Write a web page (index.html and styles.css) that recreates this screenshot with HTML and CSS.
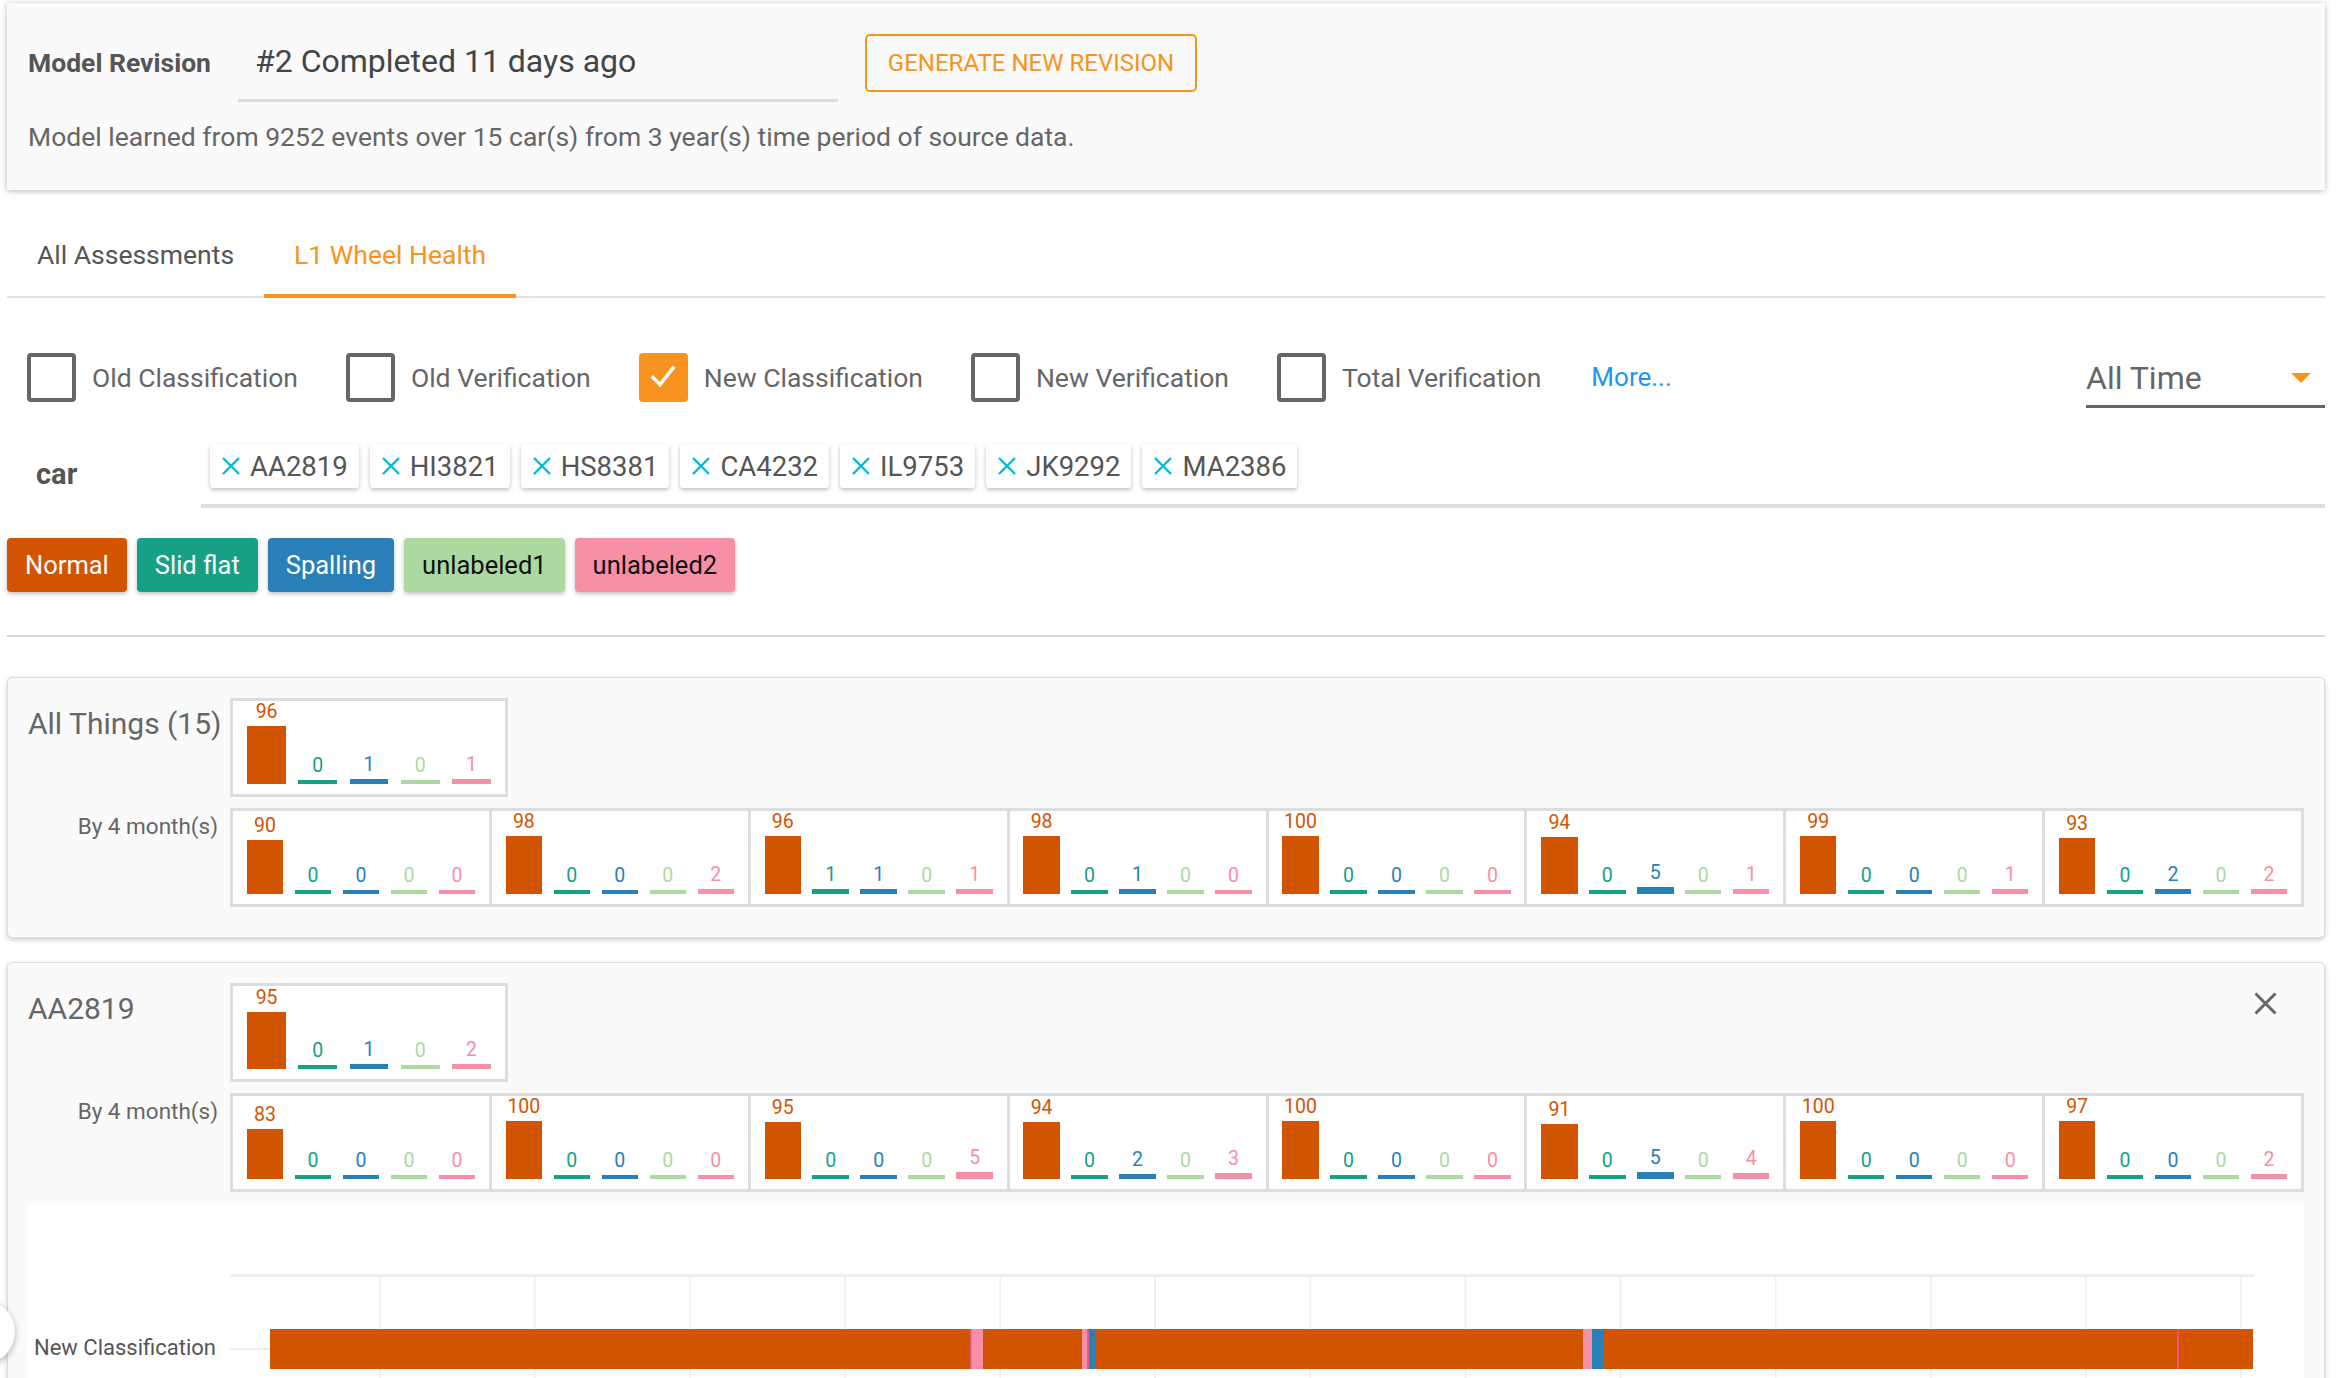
FILE: index.html
```html
<!DOCTYPE html>
<html>
<head>
<meta charset="utf-8">
<title>Model Revision</title>
<link rel="stylesheet" href="styles.css">
</head>
<body>
<div class="page">
  <section class="revision-card">
    <div class="rev-row">
      <div class="rev-label">Model Revision</div>
      <div class="rev-field">#2 Completed 11 days ago</div>
      <button class="gen-btn">Generate new revision</button>
    </div>
    <div class="rev-desc">Model learned from 9252 events over 15 car(s) from 3 year(s) time period of source data.</div>
  </section>

  <nav class="tabs">
    <div class="tab">All Assessments</div>
    <div class="tab active">L1 Wheel Health</div>
  </nav>

  <div class="filters">
    <div class="check"><span class="box"></span>Old Classification</div>
    <div class="check"><span class="box"></span>Old Verification</div>
    <div class="check"><span class="box on"><svg width="28" height="24" viewBox="0 0 28 24"><path d="M4 12.5 L11 19.5 L24 3" fill="none" stroke="#fff" stroke-width="3.5" stroke-linecap="square"/></svg></span>New Classification</div>
    <div class="check"><span class="box"></span>New Verification</div>
    <div class="check"><span class="box"></span>Total Verification</div>
    <div class="more">More...</div>
    <div class="range"><span>All Time</span><svg width="20" height="10" viewBox="0 0 20 10"><polygon points="0,0 20,0 10,10" fill="#f7931e"/></svg></div>
  </div>

  <div class="car-row">
    <div class="car-label">car</div>
    <div class="chip-field">
      <div class="chip"><svg class="x" width="20" height="18" viewBox="0 0 20 18"><path d="M2 1 L18 17 M18 1 L2 17" stroke="#00bcd4" stroke-width="2.4"/></svg>AA2819</div>
      <div class="chip"><svg class="x" width="20" height="18" viewBox="0 0 20 18"><path d="M2 1 L18 17 M18 1 L2 17" stroke="#00bcd4" stroke-width="2.4"/></svg>HI3821</div>
      <div class="chip"><svg class="x" width="20" height="18" viewBox="0 0 20 18"><path d="M2 1 L18 17 M18 1 L2 17" stroke="#00bcd4" stroke-width="2.4"/></svg>HS8381</div>
      <div class="chip"><svg class="x" width="20" height="18" viewBox="0 0 20 18"><path d="M2 1 L18 17 M18 1 L2 17" stroke="#00bcd4" stroke-width="2.4"/></svg>CA4232</div>
      <div class="chip"><svg class="x" width="20" height="18" viewBox="0 0 20 18"><path d="M2 1 L18 17 M18 1 L2 17" stroke="#00bcd4" stroke-width="2.4"/></svg>IL9753</div>
      <div class="chip"><svg class="x" width="20" height="18" viewBox="0 0 20 18"><path d="M2 1 L18 17 M18 1 L2 17" stroke="#00bcd4" stroke-width="2.4"/></svg>JK9292</div>
      <div class="chip"><svg class="x" width="20" height="18" viewBox="0 0 20 18"><path d="M2 1 L18 17 M18 1 L2 17" stroke="#00bcd4" stroke-width="2.4"/></svg>MA2386</div>
    </div>
  </div>

  <div class="legend">
    <div class="tag t0">Normal</div>
    <div class="tag t1">Slid flat</div>
    <div class="tag t2">Spalling</div>
    <div class="tag t3">unlabeled1</div>
    <div class="tag t4">unlabeled2</div>
  </div>

  <div class="divider"></div>

  <section class="thing">
    <div class="thing-title">All Things (15)</div>
    <div class="chart summary">
      <div class="band s0"><span class="val">96</span><i class="bar" style="height:57.8px"></i></div>
      <div class="band s1"><span class="val">0</span><i class="bar"></i></div>
      <div class="band s2"><span class="val">1</span><i class="bar" style="height:4.6px"></i></div>
      <div class="band s3"><span class="val">0</span><i class="bar"></i></div>
      <div class="band s4"><span class="val">1</span><i class="bar" style="height:4.6px"></i></div>
    </div>
    <div class="period">By 4 month(s)</div>
    <div class="strip">
      <div class="chart">
        <div class="band s0"><span class="val">90</span><i class="bar" style="height:54.4px"></i></div>
        <div class="band s1"><span class="val">0</span><i class="bar"></i></div>
        <div class="band s2"><span class="val">0</span><i class="bar"></i></div>
        <div class="band s3"><span class="val">0</span><i class="bar"></i></div>
        <div class="band s4"><span class="val">0</span><i class="bar"></i></div>
      </div>
      <div class="chart">
        <div class="band s0"><span class="val">98</span><i class="bar" style="height:58.9px"></i></div>
        <div class="band s1"><span class="val">0</span><i class="bar"></i></div>
        <div class="band s2"><span class="val">0</span><i class="bar"></i></div>
        <div class="band s3"><span class="val">0</span><i class="bar"></i></div>
        <div class="band s4"><span class="val">2</span><i class="bar" style="height:5.1px"></i></div>
      </div>
      <div class="chart">
        <div class="band s0"><span class="val">96</span><i class="bar" style="height:57.8px"></i></div>
        <div class="band s1"><span class="val">1</span><i class="bar" style="height:4.6px"></i></div>
        <div class="band s2"><span class="val">1</span><i class="bar" style="height:4.6px"></i></div>
        <div class="band s3"><span class="val">0</span><i class="bar"></i></div>
        <div class="band s4"><span class="val">1</span><i class="bar" style="height:4.6px"></i></div>
      </div>
      <div class="chart">
        <div class="band s0"><span class="val">98</span><i class="bar" style="height:58.9px"></i></div>
        <div class="band s1"><span class="val">0</span><i class="bar"></i></div>
        <div class="band s2"><span class="val">1</span><i class="bar" style="height:4.6px"></i></div>
        <div class="band s3"><span class="val">0</span><i class="bar"></i></div>
        <div class="band s4"><span class="val">0</span><i class="bar"></i></div>
      </div>
      <div class="chart">
        <div class="band s0"><span class="val">100</span><i class="bar" style="height:60px"></i></div>
        <div class="band s1"><span class="val">0</span><i class="bar"></i></div>
        <div class="band s2"><span class="val">0</span><i class="bar"></i></div>
        <div class="band s3"><span class="val">0</span><i class="bar"></i></div>
        <div class="band s4"><span class="val">0</span><i class="bar"></i></div>
      </div>
      <div class="chart">
        <div class="band s0"><span class="val">94</span><i class="bar" style="height:56.6px"></i></div>
        <div class="band s1"><span class="val">0</span><i class="bar"></i></div>
        <div class="band s2"><span class="val">5</span><i class="bar" style="height:6.8px"></i></div>
        <div class="band s3"><span class="val">0</span><i class="bar"></i></div>
        <div class="band s4"><span class="val">1</span><i class="bar" style="height:4.6px"></i></div>
      </div>
      <div class="chart">
        <div class="band s0"><span class="val">99</span><i class="bar" style="height:59.4px"></i></div>
        <div class="band s1"><span class="val">0</span><i class="bar"></i></div>
        <div class="band s2"><span class="val">0</span><i class="bar"></i></div>
        <div class="band s3"><span class="val">0</span><i class="bar"></i></div>
        <div class="band s4"><span class="val">1</span><i class="bar" style="height:4.6px"></i></div>
      </div>
      <div class="chart">
        <div class="band s0"><span class="val">93</span><i class="bar" style="height:56.1px"></i></div>
        <div class="band s1"><span class="val">0</span><i class="bar"></i></div>
        <div class="band s2"><span class="val">2</span><i class="bar" style="height:5.1px"></i></div>
        <div class="band s3"><span class="val">0</span><i class="bar"></i></div>
        <div class="band s4"><span class="val">2</span><i class="bar" style="height:5.1px"></i></div>
      </div>
    </div>
  </section>

  <section class="thing">
    <div class="thing-title">AA2819</div>
    <div class="chart summary">
      <div class="band s0"><span class="val">95</span><i class="bar" style="height:57.2px"></i></div>
      <div class="band s1"><span class="val">0</span><i class="bar"></i></div>
      <div class="band s2"><span class="val">1</span><i class="bar" style="height:4.6px"></i></div>
      <div class="band s3"><span class="val">0</span><i class="bar"></i></div>
      <div class="band s4"><span class="val">2</span><i class="bar" style="height:5.1px"></i></div>
    </div>
    <svg class="close" width="23" height="23" viewBox="0 0 23 23"><path d="M1.5 1.5 L21.5 21.5 M21.5 1.5 L1.5 21.5" stroke="#666" stroke-width="3"/></svg>
    <div class="period">By 4 month(s)</div>
    <div class="strip">
      <div class="chart">
        <div class="band s0"><span class="val">83</span><i class="bar" style="height:50.5px"></i></div>
        <div class="band s1"><span class="val">0</span><i class="bar"></i></div>
        <div class="band s2"><span class="val">0</span><i class="bar"></i></div>
        <div class="band s3"><span class="val">0</span><i class="bar"></i></div>
        <div class="band s4"><span class="val">0</span><i class="bar"></i></div>
      </div>
      <div class="chart">
        <div class="band s0"><span class="val">100</span><i class="bar" style="height:60px"></i></div>
        <div class="band s1"><span class="val">0</span><i class="bar"></i></div>
        <div class="band s2"><span class="val">0</span><i class="bar"></i></div>
        <div class="band s3"><span class="val">0</span><i class="bar"></i></div>
        <div class="band s4"><span class="val">0</span><i class="bar"></i></div>
      </div>
      <div class="chart">
        <div class="band s0"><span class="val">95</span><i class="bar" style="height:57.2px"></i></div>
        <div class="band s1"><span class="val">0</span><i class="bar"></i></div>
        <div class="band s2"><span class="val">0</span><i class="bar"></i></div>
        <div class="band s3"><span class="val">0</span><i class="bar"></i></div>
        <div class="band s4"><span class="val">5</span><i class="bar" style="height:6.8px"></i></div>
      </div>
      <div class="chart">
        <div class="band s0"><span class="val">94</span><i class="bar" style="height:56.6px"></i></div>
        <div class="band s1"><span class="val">0</span><i class="bar"></i></div>
        <div class="band s2"><span class="val">2</span><i class="bar" style="height:5.1px"></i></div>
        <div class="band s3"><span class="val">0</span><i class="bar"></i></div>
        <div class="band s4"><span class="val">3</span><i class="bar" style="height:5.7px"></i></div>
      </div>
      <div class="chart">
        <div class="band s0"><span class="val">100</span><i class="bar" style="height:60px"></i></div>
        <div class="band s1"><span class="val">0</span><i class="bar"></i></div>
        <div class="band s2"><span class="val">0</span><i class="bar"></i></div>
        <div class="band s3"><span class="val">0</span><i class="bar"></i></div>
        <div class="band s4"><span class="val">0</span><i class="bar"></i></div>
      </div>
      <div class="chart">
        <div class="band s0"><span class="val">91</span><i class="bar" style="height:55px"></i></div>
        <div class="band s1"><span class="val">0</span><i class="bar"></i></div>
        <div class="band s2"><span class="val">5</span><i class="bar" style="height:6.8px"></i></div>
        <div class="band s3"><span class="val">0</span><i class="bar"></i></div>
        <div class="band s4"><span class="val">4</span><i class="bar" style="height:6.2px"></i></div>
      </div>
      <div class="chart">
        <div class="band s0"><span class="val">100</span><i class="bar" style="height:60px"></i></div>
        <div class="band s1"><span class="val">0</span><i class="bar"></i></div>
        <div class="band s2"><span class="val">0</span><i class="bar"></i></div>
        <div class="band s3"><span class="val">0</span><i class="bar"></i></div>
        <div class="band s4"><span class="val">0</span><i class="bar"></i></div>
      </div>
      <div class="chart">
        <div class="band s0"><span class="val">97</span><i class="bar" style="height:58.3px"></i></div>
        <div class="band s1"><span class="val">0</span><i class="bar"></i></div>
        <div class="band s2"><span class="val">0</span><i class="bar"></i></div>
        <div class="band s3"><span class="val">0</span><i class="bar"></i></div>
        <div class="band s4"><span class="val">2</span><i class="bar" style="height:5.1px"></i></div>
      </div>
    </div>
    <div class="timeline">
      <div class="tl-label">New Classification</div>
      <svg class="tl-plot" width="2074" height="190" viewBox="0 0 2074 190">
        <rect x="0" y="71" width="2024" height="3" fill="#eeeeee"/>
        <g fill="#eeeeee">
          <rect x="149" y="71" width="1.5" height="119"/>
          <rect x="304.1" y="71" width="1.5" height="119"/>
          <rect x="459.2" y="71" width="1.5" height="119"/>
          <rect x="614.3" y="71" width="1.5" height="119"/>
          <rect x="769.4" y="71" width="1.5" height="119"/>
          <rect x="924.5" y="71" width="1.5" height="119"/>
          <rect x="1079.6" y="71" width="1.5" height="119"/>
          <rect x="1234.7" y="71" width="1.5" height="119"/>
          <rect x="1389.8" y="71" width="1.5" height="119"/>
          <rect x="1544.9" y="71" width="1.5" height="119"/>
          <rect x="1700" y="71" width="1.5" height="119"/>
          <rect x="1855.1" y="71" width="1.5" height="119"/>
          <rect x="2010.2" y="71" width="1.5" height="119"/>
        </g>
        <rect x="0" y="145" width="2024" height="2" fill="#eeeeee"/>
        <rect x="40" y="126" width="1983" height="40" fill="#d35400"/>
        <rect x="740" y="126" width="13" height="40" fill="#f78fa7"/>
        <rect x="740" y="126" width="1.5" height="40" fill="#ea5a7c"/>
        <rect x="852" y="126" width="5" height="40" fill="#f78fa7"/>
        <rect x="857" y="126" width="2" height="40" fill="#ea5a7c"/>
        <rect x="859" y="126" width="6" height="40" fill="#2980b9"/>
        <rect x="1353" y="126" width="9" height="40" fill="#f78fa7"/>
        <rect x="1362" y="126" width="12" height="40" fill="#2980b9"/>
        <rect x="1947" y="126" width="2" height="40" fill="#f0507a"/>
      </svg>
    </div>
  </section>
</div>
<div class="fab"></div>
</body>
</html>
```

FILE: styles.css
```css
* { box-sizing: border-box; }
html, body { margin: 0; padding: 0; background: #fff; }
body {
  font-family: Roboto, "Noto Sans", "Liberation Sans", sans-serif;
  color: #666;
  position: relative;
  overflow: hidden;
}
.page { padding: 0 13px 0 7px; }

/* revision card */
.revision-card {
  margin-top: 3px;
  background: #fafafa;
  box-shadow: 0 1px 6px rgba(0, 0, 0, 0.28);
  padding: 31px 21px 38px;
}
.rev-row { display: flex; align-items: flex-start; }
.rev-label {
  width: 210px;
  font-size: 26.5px;
  font-weight: 700;
  color: #555;
  line-height: 58px;
}
.rev-field {
  width: 600px;
  height: 68px;
  border-bottom: 3px solid #ddd;
  padding-left: 17px;
  font-size: 32px;
  line-height: 54px;
  color: #444;
}
.gen-btn {
  margin-left: 27px;
  width: 332px;
  height: 58px;
  border: 2px solid #f7931e;
  border-radius: 5px;
  background: transparent;
  color: #f7931e;
  font-family: inherit;
  font-size: 24px;
  text-transform: uppercase;
  display: flex;
  align-items: center;
  justify-content: center;
  padding: 0;
}
.rev-desc { margin-top: 20px; font-size: 26.5px; line-height: 30px; color: #666; }

/* tabs */
.tabs { margin-top: 10px; display: flex; border-bottom: 2px solid #e3e3e3; }
.tab {
  padding: 40px 30px 24px;
  font-size: 26.5px;
  line-height: 30px;
  color: #555;
  border-bottom: 4px solid transparent;
  margin-bottom: -2px;
}
.tab.active { color: #f7931e; border-bottom-color: #f7931e; }

/* filters */
.filters { margin-top: 54px; display: flex; align-items: flex-start; padding-left: 20px; }
.check {
  display: flex;
  align-items: center;
  height: 50px;
  margin-right: 48px;
  font-size: 26.5px;
  color: #666;
}
.box {
  width: 49px;
  height: 49px;
  border: 4px solid #666;
  border-radius: 4px;
  margin-right: 16px;
  flex: none;
}
.box.on {
  background: #f7931e;
  border-color: #f7931e;
  display: flex;
  align-items: center;
  justify-content: center;
}
.more { color: #2196f3; font-size: 26px; line-height: 50px; margin-left: 2px; }
.range {
  margin-left: auto;
  width: 239px;
  height: 56px;
  border-bottom: 3px solid #666;
  display: flex;
  align-items: center;
  justify-content: space-between;
  padding: 0 14px 2px 0;
  font-size: 32px;
  color: #666;
}

/* car chips */
.car-row { margin-top: 36px; display: flex; }
.car-label {
  width: 194px;
  padding: 13px 0 0 29px;
  font-size: 29px;
  font-weight: 700;
  line-height: 34px;
  color: #555;
}
.chip-field {
  flex: 1;
  display: flex;
  gap: 11px;
  padding: 0 0 16px 9px;
  border-bottom: 4px solid #ddd;
}
.chip {
  height: 44px;
  display: flex;
  align-items: center;
  padding: 0 11px;
  background: #fff;
  border-radius: 3px;
  box-shadow: 0 2px 4px rgba(0, 0, 0, 0.25);
  font-size: 27.5px;
  color: #555;
}
.chip .x { margin-right: 9px; flex: none; }

/* legend */
.legend { margin-top: 30px; display: flex; gap: 10px; }
.tag {
  height: 54px;
  padding: 0 18px;
  border-radius: 4px;
  display: flex;
  align-items: center;
  font-size: 25.5px;
  color: #fff;
  box-shadow: 0 2px 4px rgba(0, 0, 0, 0.25);
}
.t0 { background: #d35400; }
.t1 { background: #16a085; }
.t2 { background: #2980b9; }
.t3 { background: #abd9a0; color: #111; }
.t4 { background: #f78fa7; color: #111; }

.divider { margin-top: 43px; height: 2px; background: #d6d6d6; }

/* cards */
.thing {
  position: relative;
  margin-top: 40px;
  background: #fafafa;
  border: 1px solid #dcdcdc;
  border-radius: 5px;
  box-shadow: 0 2px 5px rgba(0, 0, 0, 0.2);
  padding: 20px 20px 30px;
  display: grid;
  grid-template-columns: 202px 1fr;
  row-gap: 11px;
}
.thing + .thing { margin-top: 24px; }
.thing-title { font-size: 30px; line-height: 36px; color: #666; padding-top: 8px; }
.period {
  text-align: right;
  padding: 5px 12px 0 0;
  font-size: 22.5px;
  line-height: 26px;
  color: #666;
}
.close { position: absolute; top: 29px; right: 47px; }

.chart {
  height: 93px;
  display: flex;
  padding: 0 8px 10px;
  background: #fff;
}
.chart.summary { width: 278px; height: 99px; border: 3px solid #ddd; }
.strip { display: flex; border: 3px solid #ddd; background: #fff; }
.strip .chart { flex: 1; border-left: 3px solid #ddd; }
.strip .chart:first-child { border-left: 0; }
.band {
  flex: 1;
  display: flex;
  flex-direction: column;
  justify-content: flex-end;
  align-items: center;
}
.val { font-size: 19.5px; line-height: 22px; margin-bottom: 3px; }
.bar { display: block; width: 76%; height: 4px; }
.s0 { color: #d35400; } .s0 .bar { background: #d35400; }
.s1 { color: #16a085; } .s1 .bar { background: #16a085; }
.s2 { color: #2980b9; } .s2 .bar { background: #2980b9; }
.s3 { color: #abd9a0; } .s3 .bar { background: #abd9a0; }
.s4 { color: #f78fa7; } .s4 .bar { background: #f78fa7; }

/* timeline */
.timeline {
  grid-column: 1 / -1;
  display: flex;
  background: #fff;
  height: 190px;
}
.tl-label {
  width: 202px;
  flex: none;
  padding: 132px 0 0 6px;
  font-size: 22px;
  line-height: 26px;
  color: #555;
}
.tl-plot { flex: none; display: block; }

.fab {
  position: absolute;
  left: -49px;
  top: 1300px;
  width: 64px;
  height: 64px;
  border-radius: 50%;
  background: #fff;
  box-shadow: 0 2px 6px rgba(0, 0, 0, 0.3);
}
```
